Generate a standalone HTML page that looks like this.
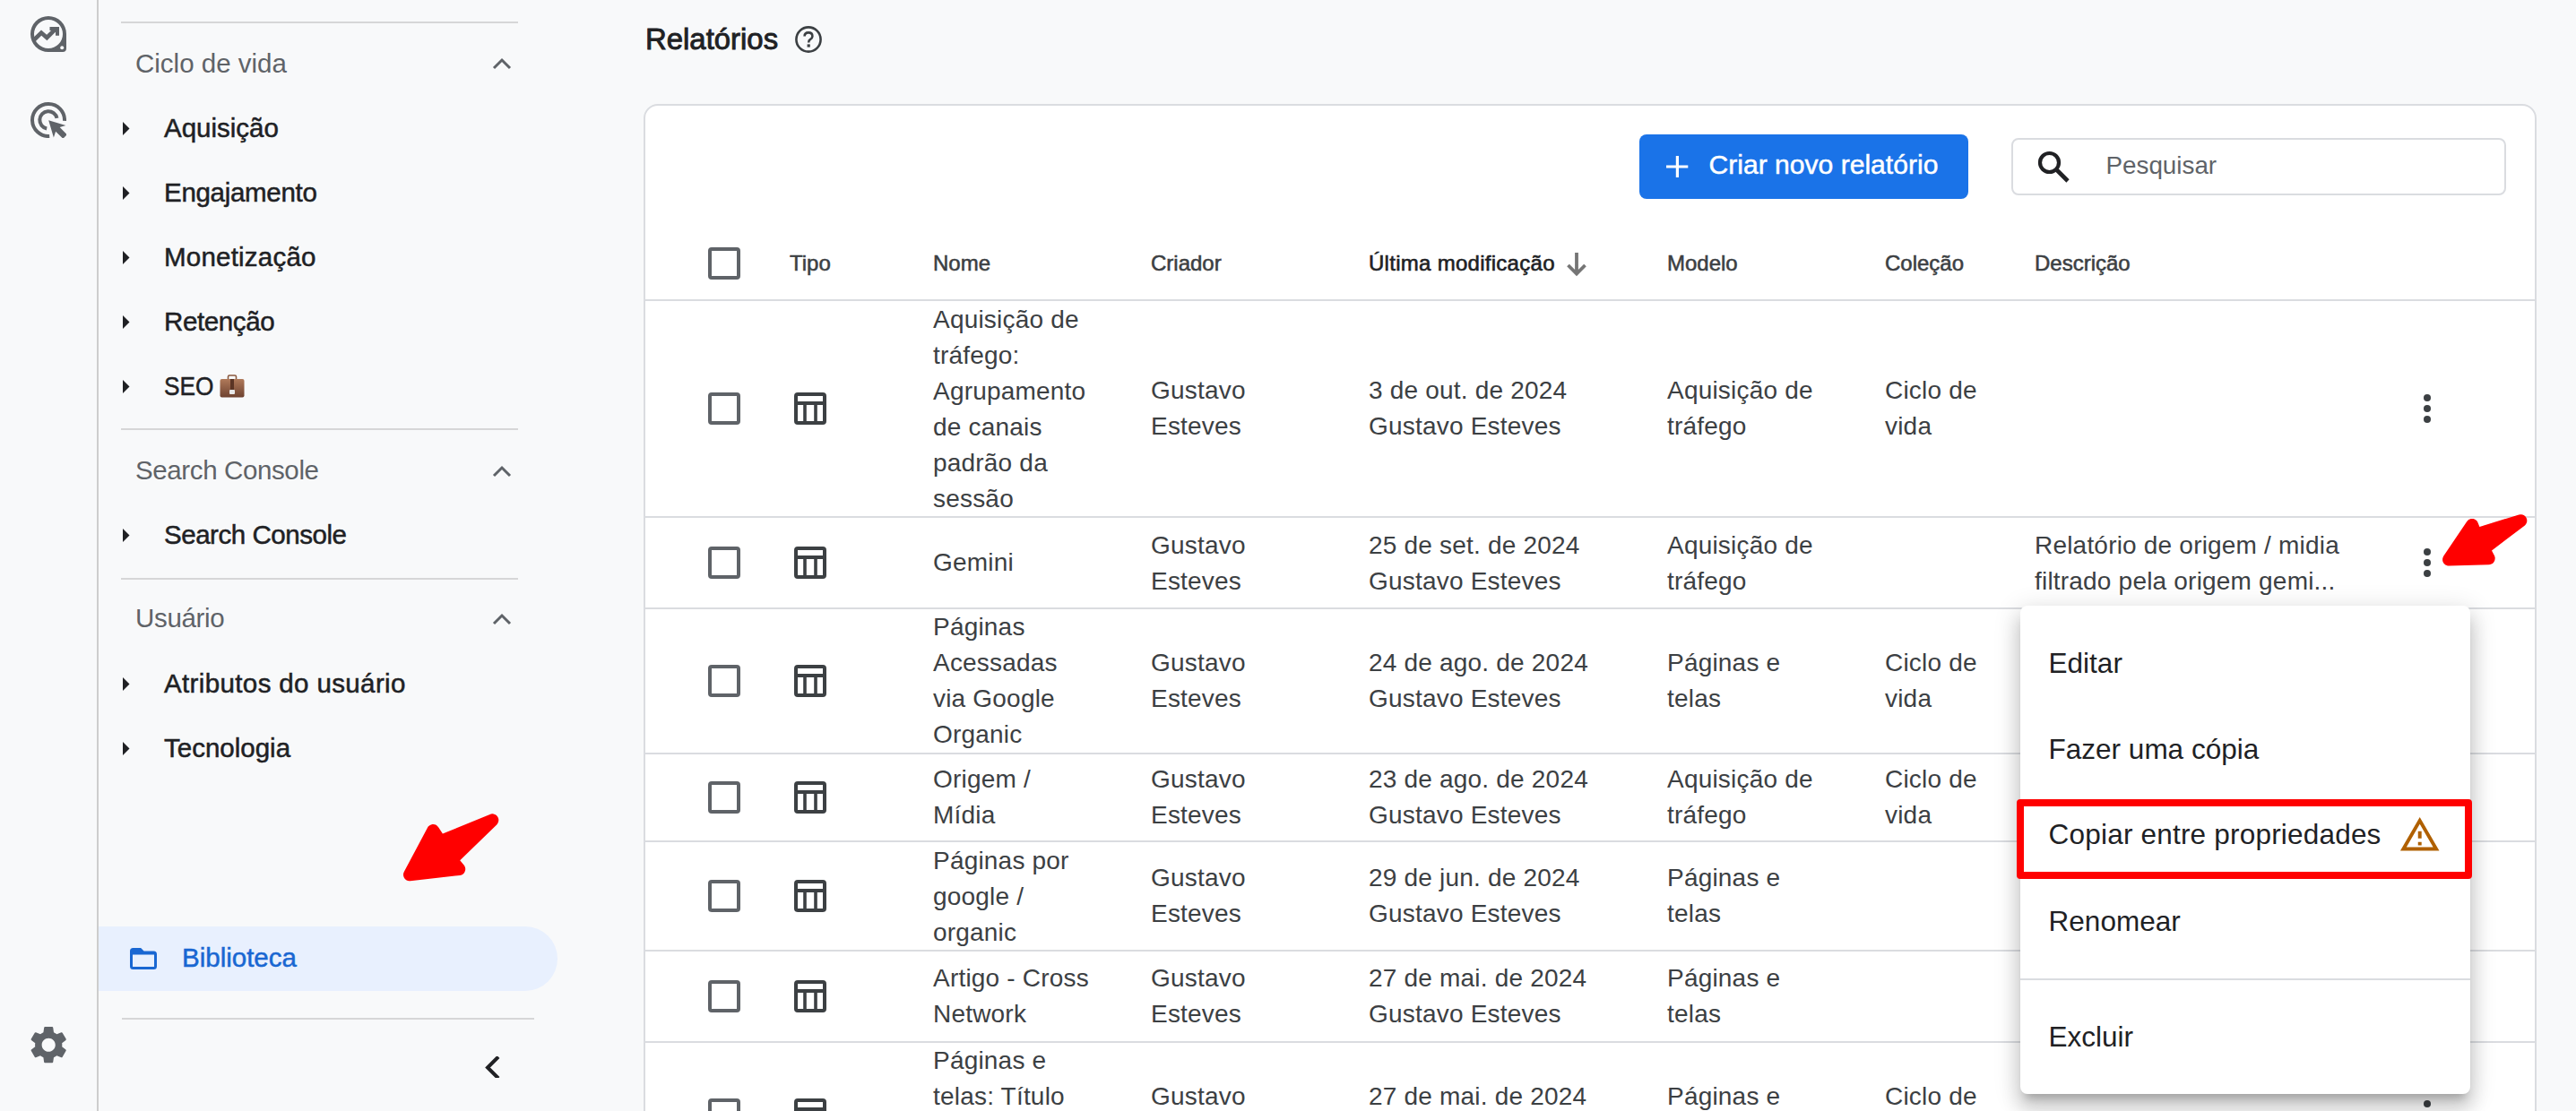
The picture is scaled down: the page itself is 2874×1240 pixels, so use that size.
<!DOCTYPE html>
<html><head><meta charset="utf-8"><style>
*{margin:0;padding:0;box-sizing:border-box}
html,body{width:2874px;height:1240px;overflow:hidden;background:#f8f9fa}
body{position:relative;font-family:"Liberation Sans",sans-serif}
.t{position:absolute;white-space:nowrap}
.abs{position:absolute}
.hl{position:absolute;height:2px;background:#dadce0}
</style></head><body>
<div class="abs" style="left:108px;top:0;width:2px;height:1240px;background:#cdcdcd"></div>
<svg class="abs" style="left:34px;top:18px" width="40" height="40" viewBox="0 0 40 40">
<path fill="#5f6368" fill-rule="evenodd" d="M20 0A20 20 0 0 0 0 20A20 20 0 0 0 20 40H36A4 4 0 0 0 40 36V20A20 20 0 0 0 20 0ZM20 4A16 16 0 1 1 20 36A16 16 0 1 1 20 4Z"/>
<circle cx="35.2" cy="35.2" r="2" fill="#f8f9fa"/>
<polyline points="3.5,27 12.1,18.6 18.3,24 27.5,14.8" fill="none" stroke="#5f6368" stroke-width="4.6" stroke-linejoin="miter"/>
<polygon points="21.5,12 32,12 32,21.8 28,21.8 28,16 21.5,16" fill="#5f6368"/>
</svg>
<svg class="abs" style="left:34px;top:114px" width="40" height="40" viewBox="0 0 40 40">
<path d="M38 20.9A18 18 0 1 0 21.2 38" fill="none" stroke="#5f6368" stroke-width="4"/>
<path d="M29.5 17.9A9.7 9.7 0 1 0 18.2 29.5" fill="none" stroke="#5f6368" stroke-width="4"/>
<polygon points="20.2,20.2 39.4,25.9 32.7,28.1 40.75,36.3 36.3,40.75 28.1,32.7 25.9,39.4" fill="#5f6368"/>
</svg>
<svg class="abs" style="left:28.8px;top:1140.8px" width="50.4" height="50.4" viewBox="0 0 24 24">
<path fill="#5f6368" d="M19.14 12.94c.04-.3.06-.61.06-.94 0-.32-.02-.64-.07-.94l2.03-1.58c.18-.14.23-.41.12-.61l-1.92-3.32c-.12-.22-.37-.29-.59-.22l-2.39.96c-.5-.38-1.03-.7-1.62-.94l-.36-2.54c-.04-.24-.24-.41-.48-.41h-3.84c-.24 0-.43.17-.47.41l-.36 2.54c-.59.24-1.13.57-1.62.94l-2.39-.96c-.22-.08-.47 0-.59.22L2.74 8.87c-.12.21-.08.47.12.61l2.03 1.58c-.05.3-.09.63-.09.94s.02.64.07.94l-2.03 1.58c-.18.14-.23.41-.12.61l1.92 3.32c.12.22.37.29.59.22l2.39-.96c.5.38 1.03.7 1.62.94l.36 2.54c.05.24.24.41.48.41h3.84c.24 0 .44-.17.47-.41l.36-2.54c.59-.24 1.13-.56 1.62-.94l2.39.96c.22.08.47 0 .59-.22l1.92-3.32c.12-.22.07-.47-.12-.61l-2.01-1.58zM12 15.6c-1.98 0-3.6-1.62-3.6-3.6s1.62-3.6 3.6-3.6 3.6 1.62 3.6 3.6-1.62 3.6-3.6 3.6z"/>
</svg>
<div class="hl" style="left:135px;top:24px;width:443px;background:#d6d6d7"></div>
<div class="hl" style="left:135px;top:478px;width:443px;background:#d6d6d7"></div>
<div class="hl" style="left:135px;top:645px;width:443px;background:#d6d6d7"></div>
<div class="hl" style="left:136px;top:1136px;width:460px;background:#d6d6d7"></div>
<div class="t" style="left:151px;top:53.82px;font-size:29.5px;line-height:33.925px;color:#5f6368;letter-spacing:0px">Ciclo de vida</div>
<svg class="abs" style="left:548px;top:59.3px" width="24" height="24" viewBox="0 0 24 24"><polyline points="3,17 12,8 21,17" fill="none" stroke="#5f6368" stroke-width="3"/></svg>
<div class="t" style="left:151px;top:508.42px;font-size:29.5px;line-height:33.925px;color:#5f6368;letter-spacing:-0.38px">Search Console</div>
<svg class="abs" style="left:548px;top:513.9px" width="24" height="24" viewBox="0 0 24 24"><polyline points="3,17 12,8 21,17" fill="none" stroke="#5f6368" stroke-width="3"/></svg>
<div class="t" style="left:151px;top:673.32px;font-size:29.5px;line-height:33.925px;color:#5f6368;letter-spacing:-0.33px">Usuário</div>
<svg class="abs" style="left:548px;top:678.8px" width="24" height="24" viewBox="0 0 24 24"><polyline points="3,17 12,8 21,17" fill="none" stroke="#5f6368" stroke-width="3"/></svg>
<div class="t" style="left:183px;top:125.82px;font-size:29.5px;line-height:33.925px;color:#202124;-webkit-text-stroke:0.5px #202124;letter-spacing:0px">Aquisição</div>
<svg class="abs" style="left:137px;top:136px" width="8" height="15" viewBox="0 0 8 15"><polygon points="0,0 7.5,7.5 0,15" fill="#202124"/></svg>
<div class="t" style="left:183px;top:197.82px;font-size:29.5px;line-height:33.925px;color:#202124;-webkit-text-stroke:0.5px #202124;letter-spacing:-0.3px">Engajamento</div>
<svg class="abs" style="left:137px;top:208px" width="8" height="15" viewBox="0 0 8 15"><polygon points="0,0 7.5,7.5 0,15" fill="#202124"/></svg>
<div class="t" style="left:183px;top:269.82px;font-size:29.5px;line-height:33.925px;color:#202124;-webkit-text-stroke:0.5px #202124;letter-spacing:0.22px">Monetização</div>
<svg class="abs" style="left:137px;top:280px" width="8" height="15" viewBox="0 0 8 15"><polygon points="0,0 7.5,7.5 0,15" fill="#202124"/></svg>
<div class="t" style="left:183px;top:341.82px;font-size:29.5px;line-height:33.925px;color:#202124;-webkit-text-stroke:0.5px #202124;letter-spacing:-0.37px">Retenção</div>
<svg class="abs" style="left:137px;top:352px" width="8" height="15" viewBox="0 0 8 15"><polygon points="0,0 7.5,7.5 0,15" fill="#202124"/></svg>
<div class="t" style="left:183px;top:413.82px;font-size:29.5px;line-height:33.925px;color:#202124;-webkit-text-stroke:0.5px #202124;letter-spacing:0px;transform:scaleX(0.89);transform-origin:0 0">SEO</div>
<svg class="abs" style="left:137px;top:424px" width="8" height="15" viewBox="0 0 8 15"><polygon points="0,0 7.5,7.5 0,15" fill="#202124"/></svg>
<div class="t" style="left:183px;top:579.82px;font-size:29.5px;line-height:33.925px;color:#202124;-webkit-text-stroke:0.5px #202124;letter-spacing:-0.46px">Search Console</div>
<svg class="abs" style="left:137px;top:590px" width="8" height="15" viewBox="0 0 8 15"><polygon points="0,0 7.5,7.5 0,15" fill="#202124"/></svg>
<div class="t" style="left:183px;top:745.82px;font-size:29.5px;line-height:33.925px;color:#202124;-webkit-text-stroke:0.5px #202124;letter-spacing:0.37px">Atributos do usuário</div>
<svg class="abs" style="left:137px;top:756px" width="8" height="15" viewBox="0 0 8 15"><polygon points="0,0 7.5,7.5 0,15" fill="#202124"/></svg>
<div class="t" style="left:183px;top:817.82px;font-size:29.5px;line-height:33.925px;color:#202124;-webkit-text-stroke:0.5px #202124;letter-spacing:0px">Tecnologia</div>
<svg class="abs" style="left:137px;top:828px" width="8" height="15" viewBox="0 0 8 15"><polygon points="0,0 7.5,7.5 0,15" fill="#202124"/></svg>
<svg class="abs" style="left:245px;top:418px" width="28" height="26" viewBox="0 0 28 26">
<defs><linearGradient id="bc" x1="0" y1="0" x2="0" y2="1"><stop offset="0" stop-color="#b07a5a"/><stop offset="1" stop-color="#6e4230"/></linearGradient></defs>
<path d="M9.5 5V2.5Q9.5 1 11 1H17Q18.5 1 18.5 2.5V5" fill="none" stroke="#8a5a40" stroke-width="1.6"/>
<rect x="0.5" y="5" width="27" height="20.5" rx="2" fill="url(#bc)"/>
<rect x="12" y="5" width="4" height="12" fill="#5a3424"/>
<rect x="11" y="17" width="6" height="5" rx="1" fill="#e8e8e8"/>
</svg>
<div class="abs" style="left:110px;top:1034px;width:512px;height:72px;background:#e8f0fe;border-radius:0 36px 36px 0"></div>
<svg class="abs" style="left:145px;top:1058px" width="30" height="24" viewBox="0 0 30 24">
<path d="M1.5 3.5Q1.5 1.5 3.5 1.5H11.5L15 5H26.5Q28.5 5 28.5 7V20.5Q28.5 22.5 26.5 22.5H3.5Q1.5 22.5 1.5 20.5Z" fill="none" stroke="#1967d2" stroke-width="3"/>
<path d="M1.5 3.5Q1.5 1.5 3.5 1.5H11.5L15 5H28.5V7.5H1.5Z" fill="#1967d2"/>
</svg>
<div class="t" style="left:203px;top:1051.82px;font-size:29.5px;line-height:33.925px;color:#1967d2;-webkit-text-stroke:0.5px #1967d2">Biblioteca</div>
<svg class="abs" style="left:537px;top:1179px" width="24" height="24" viewBox="0 0 24 24"><polyline points="19,0.5 7,12.5 19,24.5" fill="none" stroke="#202124" stroke-width="4"/></svg>
<div class="t" style="left:720px;top:24.68px;font-size:32.9px;line-height:37.834999999999994px;color:#202124;-webkit-text-stroke:0.9px #202124">Relatórios</div>
<svg class="abs" style="left:886px;top:28px" width="32" height="32" viewBox="0 0 32 32"><circle cx="16" cy="16" r="13.6" fill="none" stroke="#3c4043" stroke-width="2.6"/><path d="M11.6 12.6Q11.6 8.4 16 8.4Q20.4 8.4 20.4 12.4Q20.4 14.6 17.8 16.2Q16.2 17.2 16.2 19.4" fill="none" stroke="#3c4043" stroke-width="2.6"/><rect x="14.6" y="21.4" width="3.2" height="3.2" fill="#3c4043"/></svg>
<div class="abs" style="left:718px;top:116px;width:2112px;height:1300px;background:#fff;border:2px solid #dadce0;border-radius:16px"></div>
<div class="abs" style="left:1829px;top:150px;width:367px;height:72px;background:#1a73e8;border-radius:8px"></div>
<svg class="abs" style="left:1859px;top:174px" width="24.5" height="24" viewBox="0 0 24.5 24"><path d="M12.4 0V24M0 12H24.3" stroke="#fff" stroke-width="3.2"/></svg>
<div class="t" style="left:1906.5px;top:167.26px;font-size:30.1px;line-height:34.615px;color:#fff;-webkit-text-stroke:0.5px #fff">Criar novo relatório</div>
<div class="abs" style="left:2244px;top:154px;width:552px;height:64px;background:#fff;border:2px solid #dadce0;border-radius:8px"></div>
<svg class="abs" style="left:2273px;top:168px" width="36" height="36" viewBox="0 0 36 36"><circle cx="13.5" cy="13.5" r="10.5" fill="none" stroke="#202124" stroke-width="4.2"/><path d="M21 21L34 34" stroke="#202124" stroke-width="4.6"/></svg>
<div class="t" style="left:2349.5px;top:169.38px;font-size:27.8px;line-height:31.97px;color:#5f6368;">Pesquisar</div>
<div class="abs" style="left:790px;top:276px;width:36px;height:36px;border:4px solid #5f6368;border-radius:4px"></div>
<div class="t" style="left:881px;top:279.88px;font-size:24px;line-height:27.599999999999998px;color:#3c4043;-webkit-text-stroke:0.55px #3c4043">Tipo</div>
<div class="t" style="left:1041px;top:279.88px;font-size:24px;line-height:27.599999999999998px;color:#3c4043;-webkit-text-stroke:0.55px #3c4043">Nome</div>
<div class="t" style="left:1284px;top:279.88px;font-size:24px;line-height:27.599999999999998px;color:#3c4043;-webkit-text-stroke:0.55px #3c4043">Criador</div>
<div class="t" style="left:1527px;top:279.88px;font-size:24px;line-height:27.599999999999998px;color:#202124;-webkit-text-stroke:0.6px #202124;letter-spacing:0.28px">Última modificação</div>
<div class="t" style="left:1860px;top:279.88px;font-size:24px;line-height:27.599999999999998px;color:#3c4043;-webkit-text-stroke:0.55px #3c4043">Modelo</div>
<div class="t" style="left:2103px;top:279.88px;font-size:24px;line-height:27.599999999999998px;color:#3c4043;-webkit-text-stroke:0.55px #3c4043">Coleção</div>
<div class="t" style="left:2270px;top:279.88px;font-size:24px;line-height:27.599999999999998px;color:#3c4043;-webkit-text-stroke:0.55px #3c4043">Descrição</div>
<svg class="abs" style="left:1745px;top:279px" width="32" height="32" viewBox="0 0 32 32"><path d="M14 3V26M4.5 17L14 26.5L23.5 17" fill="none" stroke="#757575" stroke-width="3.8"/></svg>
<div class="hl" style="left:720px;top:334px;width:2108px"></div>
<div class="abs" style="left:790px;top:438.0px;width:36px;height:36px;border:4px solid #5f6368;border-radius:4px"></div>
<svg class="abs" style="left:886px;top:438.0px" width="36" height="36" viewBox="0 0 36 36"><path fill="#3c4043" fill-rule="evenodd" d="M4 0H32A4 4 0 0 1 36 4V32A4 4 0 0 1 32 36H4A4 4 0 0 1 0 32V4A4 4 0 0 1 4 0ZM4 4V10H32V4ZM4 14V32H10.2V14ZM13.8 14V32H22.2V14ZM25.8 14V32H32V14Z"/></svg>
<div class="t" style="left:1041px;top:340.50px;font-size:28px;line-height:32.199999999999996px;color:#3c4043;letter-spacing:0.2px">Aquisição de</div>
<div class="t" style="left:1041px;top:380.50px;font-size:28px;line-height:32.199999999999996px;color:#3c4043;letter-spacing:0.2px">tráfego:</div>
<div class="t" style="left:1041px;top:420.50px;font-size:28px;line-height:32.199999999999996px;color:#3c4043;letter-spacing:0.2px">Agrupamento</div>
<div class="t" style="left:1041px;top:460.50px;font-size:28px;line-height:32.199999999999996px;color:#3c4043;letter-spacing:0.2px">de canais</div>
<div class="t" style="left:1041px;top:500.50px;font-size:28px;line-height:32.199999999999996px;color:#3c4043;letter-spacing:0.2px">padrão da</div>
<div class="t" style="left:1041px;top:540.50px;font-size:28px;line-height:32.199999999999996px;color:#3c4043;letter-spacing:0.2px">sessão</div>
<div class="t" style="left:1284px;top:419.90px;font-size:28px;line-height:32.199999999999996px;color:#3c4043;letter-spacing:0.2px">Gustavo</div>
<div class="t" style="left:1284px;top:459.90px;font-size:28px;line-height:32.199999999999996px;color:#3c4043;letter-spacing:0.2px">Esteves</div>
<div class="t" style="left:1527px;top:419.90px;font-size:28px;line-height:32.199999999999996px;color:#3c4043;letter-spacing:0.2px">3 de out. de 2024</div>
<div class="t" style="left:1527px;top:459.90px;font-size:28px;line-height:32.199999999999996px;color:#3c4043;letter-spacing:0.2px">Gustavo Esteves</div>
<div class="t" style="left:1860px;top:419.90px;font-size:28px;line-height:32.199999999999996px;color:#3c4043;letter-spacing:0.2px">Aquisição de</div>
<div class="t" style="left:1860px;top:459.90px;font-size:28px;line-height:32.199999999999996px;color:#3c4043;letter-spacing:0.2px">tráfego</div>
<div class="t" style="left:2103px;top:419.90px;font-size:28px;line-height:32.199999999999996px;color:#3c4043;letter-spacing:0.2px">Ciclo de</div>
<div class="t" style="left:2103px;top:459.90px;font-size:28px;line-height:32.199999999999996px;color:#3c4043;letter-spacing:0.2px">vida</div>
<svg class="abs" style="left:2700px;top:436.0px" width="16" height="40" viewBox="0 0 16 40"><circle cx="8" cy="8" r="4" fill="#3c4043"/><circle cx="8" cy="20" r="4" fill="#3c4043"/><circle cx="8" cy="32" r="4" fill="#3c4043"/></svg>
<div class="abs" style="left:790px;top:610.0px;width:36px;height:36px;border:4px solid #5f6368;border-radius:4px"></div>
<svg class="abs" style="left:886px;top:610.0px" width="36" height="36" viewBox="0 0 36 36"><path fill="#3c4043" fill-rule="evenodd" d="M4 0H32A4 4 0 0 1 36 4V32A4 4 0 0 1 32 36H4A4 4 0 0 1 0 32V4A4 4 0 0 1 4 0ZM4 4V10H32V4ZM4 14V32H10.2V14ZM13.8 14V32H22.2V14ZM25.8 14V32H32V14Z"/></svg>
<div class="t" style="left:1041px;top:612.20px;font-size:28px;line-height:32.199999999999996px;color:#3c4043;letter-spacing:0.2px">Gemini</div>
<div class="t" style="left:1284px;top:592.50px;font-size:28px;line-height:32.199999999999996px;color:#3c4043;letter-spacing:0.2px">Gustavo</div>
<div class="t" style="left:1284px;top:632.50px;font-size:28px;line-height:32.199999999999996px;color:#3c4043;letter-spacing:0.2px">Esteves</div>
<div class="t" style="left:1527px;top:592.50px;font-size:28px;line-height:32.199999999999996px;color:#3c4043;letter-spacing:0.2px">25 de set. de 2024</div>
<div class="t" style="left:1527px;top:632.50px;font-size:28px;line-height:32.199999999999996px;color:#3c4043;letter-spacing:0.2px">Gustavo Esteves</div>
<div class="t" style="left:1860px;top:592.50px;font-size:28px;line-height:32.199999999999996px;color:#3c4043;letter-spacing:0.2px">Aquisição de</div>
<div class="t" style="left:1860px;top:632.50px;font-size:28px;line-height:32.199999999999996px;color:#3c4043;letter-spacing:0.2px">tráfego</div>
<div class="t" style="left:2270px;top:592.50px;font-size:28px;line-height:32.199999999999996px;color:#3c4043;letter-spacing:0.2px">Relatório de origem / midia</div>
<div class="t" style="left:2270px;top:632.50px;font-size:28px;line-height:32.199999999999996px;color:#3c4043;letter-spacing:0.2px">filtrado pela origem gemi...</div>
<svg class="abs" style="left:2700px;top:608.0px" width="16" height="40" viewBox="0 0 16 40"><circle cx="8" cy="8" r="4" fill="#3c4043"/><circle cx="8" cy="20" r="4" fill="#3c4043"/><circle cx="8" cy="32" r="4" fill="#3c4043"/></svg>
<div class="hl" style="left:720px;top:576px;width:2108px"></div>
<div class="abs" style="left:790px;top:742.0px;width:36px;height:36px;border:4px solid #5f6368;border-radius:4px"></div>
<svg class="abs" style="left:886px;top:742.0px" width="36" height="36" viewBox="0 0 36 36"><path fill="#3c4043" fill-rule="evenodd" d="M4 0H32A4 4 0 0 1 36 4V32A4 4 0 0 1 32 36H4A4 4 0 0 1 0 32V4A4 4 0 0 1 4 0ZM4 4V10H32V4ZM4 14V32H10.2V14ZM13.8 14V32H22.2V14ZM25.8 14V32H32V14Z"/></svg>
<div class="t" style="left:1041px;top:684.10px;font-size:28px;line-height:32.199999999999996px;color:#3c4043;letter-spacing:0.2px">Páginas</div>
<div class="t" style="left:1041px;top:724.10px;font-size:28px;line-height:32.199999999999996px;color:#3c4043;letter-spacing:0.2px">Acessadas</div>
<div class="t" style="left:1041px;top:764.10px;font-size:28px;line-height:32.199999999999996px;color:#3c4043;letter-spacing:0.2px">via Google</div>
<div class="t" style="left:1041px;top:804.10px;font-size:28px;line-height:32.199999999999996px;color:#3c4043;letter-spacing:0.2px">Organic</div>
<div class="t" style="left:1284px;top:723.90px;font-size:28px;line-height:32.199999999999996px;color:#3c4043;letter-spacing:0.2px">Gustavo</div>
<div class="t" style="left:1284px;top:763.90px;font-size:28px;line-height:32.199999999999996px;color:#3c4043;letter-spacing:0.2px">Esteves</div>
<div class="t" style="left:1527px;top:723.90px;font-size:28px;line-height:32.199999999999996px;color:#3c4043;letter-spacing:0.2px">24 de ago. de 2024</div>
<div class="t" style="left:1527px;top:763.90px;font-size:28px;line-height:32.199999999999996px;color:#3c4043;letter-spacing:0.2px">Gustavo Esteves</div>
<div class="t" style="left:1860px;top:723.90px;font-size:28px;line-height:32.199999999999996px;color:#3c4043;letter-spacing:0.2px">Páginas e</div>
<div class="t" style="left:1860px;top:763.90px;font-size:28px;line-height:32.199999999999996px;color:#3c4043;letter-spacing:0.2px">telas</div>
<div class="t" style="left:2103px;top:723.90px;font-size:28px;line-height:32.199999999999996px;color:#3c4043;letter-spacing:0.2px">Ciclo de</div>
<div class="t" style="left:2103px;top:763.90px;font-size:28px;line-height:32.199999999999996px;color:#3c4043;letter-spacing:0.2px">vida</div>
<svg class="abs" style="left:2700px;top:740.0px" width="16" height="40" viewBox="0 0 16 40"><circle cx="8" cy="8" r="4" fill="#3c4043"/><circle cx="8" cy="20" r="4" fill="#3c4043"/><circle cx="8" cy="32" r="4" fill="#3c4043"/></svg>
<div class="hl" style="left:720px;top:678px;width:2108px"></div>
<div class="abs" style="left:790px;top:872.0px;width:36px;height:36px;border:4px solid #5f6368;border-radius:4px"></div>
<svg class="abs" style="left:886px;top:872.0px" width="36" height="36" viewBox="0 0 36 36"><path fill="#3c4043" fill-rule="evenodd" d="M4 0H32A4 4 0 0 1 36 4V32A4 4 0 0 1 32 36H4A4 4 0 0 1 0 32V4A4 4 0 0 1 4 0ZM4 4V10H32V4ZM4 14V32H10.2V14ZM13.8 14V32H22.2V14ZM25.8 14V32H32V14Z"/></svg>
<div class="t" style="left:1041px;top:853.90px;font-size:28px;line-height:32.199999999999996px;color:#3c4043;letter-spacing:0.2px">Origem /</div>
<div class="t" style="left:1041px;top:893.90px;font-size:28px;line-height:32.199999999999996px;color:#3c4043;letter-spacing:0.2px">Mídia</div>
<div class="t" style="left:1284px;top:853.90px;font-size:28px;line-height:32.199999999999996px;color:#3c4043;letter-spacing:0.2px">Gustavo</div>
<div class="t" style="left:1284px;top:893.90px;font-size:28px;line-height:32.199999999999996px;color:#3c4043;letter-spacing:0.2px">Esteves</div>
<div class="t" style="left:1527px;top:853.90px;font-size:28px;line-height:32.199999999999996px;color:#3c4043;letter-spacing:0.2px">23 de ago. de 2024</div>
<div class="t" style="left:1527px;top:893.90px;font-size:28px;line-height:32.199999999999996px;color:#3c4043;letter-spacing:0.2px">Gustavo Esteves</div>
<div class="t" style="left:1860px;top:853.90px;font-size:28px;line-height:32.199999999999996px;color:#3c4043;letter-spacing:0.2px">Aquisição de</div>
<div class="t" style="left:1860px;top:893.90px;font-size:28px;line-height:32.199999999999996px;color:#3c4043;letter-spacing:0.2px">tráfego</div>
<div class="t" style="left:2103px;top:853.90px;font-size:28px;line-height:32.199999999999996px;color:#3c4043;letter-spacing:0.2px">Ciclo de</div>
<div class="t" style="left:2103px;top:893.90px;font-size:28px;line-height:32.199999999999996px;color:#3c4043;letter-spacing:0.2px">vida</div>
<svg class="abs" style="left:2700px;top:870.0px" width="16" height="40" viewBox="0 0 16 40"><circle cx="8" cy="8" r="4" fill="#3c4043"/><circle cx="8" cy="20" r="4" fill="#3c4043"/><circle cx="8" cy="32" r="4" fill="#3c4043"/></svg>
<div class="hl" style="left:720px;top:840px;width:2108px"></div>
<div class="abs" style="left:790px;top:982.0px;width:36px;height:36px;border:4px solid #5f6368;border-radius:4px"></div>
<svg class="abs" style="left:886px;top:982.0px" width="36" height="36" viewBox="0 0 36 36"><path fill="#3c4043" fill-rule="evenodd" d="M4 0H32A4 4 0 0 1 36 4V32A4 4 0 0 1 32 36H4A4 4 0 0 1 0 32V4A4 4 0 0 1 4 0ZM4 4V10H32V4ZM4 14V32H10.2V14ZM13.8 14V32H22.2V14ZM25.8 14V32H32V14Z"/></svg>
<div class="t" style="left:1041px;top:944.70px;font-size:28px;line-height:32.199999999999996px;color:#3c4043;letter-spacing:0.2px">Páginas por</div>
<div class="t" style="left:1041px;top:984.70px;font-size:28px;line-height:32.199999999999996px;color:#3c4043;letter-spacing:0.2px">google /</div>
<div class="t" style="left:1041px;top:1024.70px;font-size:28px;line-height:32.199999999999996px;color:#3c4043;letter-spacing:0.2px">organic</div>
<div class="t" style="left:1284px;top:963.90px;font-size:28px;line-height:32.199999999999996px;color:#3c4043;letter-spacing:0.2px">Gustavo</div>
<div class="t" style="left:1284px;top:1003.90px;font-size:28px;line-height:32.199999999999996px;color:#3c4043;letter-spacing:0.2px">Esteves</div>
<div class="t" style="left:1527px;top:963.90px;font-size:28px;line-height:32.199999999999996px;color:#3c4043;letter-spacing:0.2px">29 de jun. de 2024</div>
<div class="t" style="left:1527px;top:1003.90px;font-size:28px;line-height:32.199999999999996px;color:#3c4043;letter-spacing:0.2px">Gustavo Esteves</div>
<div class="t" style="left:1860px;top:963.90px;font-size:28px;line-height:32.199999999999996px;color:#3c4043;letter-spacing:0.2px">Páginas e</div>
<div class="t" style="left:1860px;top:1003.90px;font-size:28px;line-height:32.199999999999996px;color:#3c4043;letter-spacing:0.2px">telas</div>
<svg class="abs" style="left:2700px;top:980.0px" width="16" height="40" viewBox="0 0 16 40"><circle cx="8" cy="8" r="4" fill="#3c4043"/><circle cx="8" cy="20" r="4" fill="#3c4043"/><circle cx="8" cy="32" r="4" fill="#3c4043"/></svg>
<div class="hl" style="left:720px;top:938px;width:2108px"></div>
<div class="abs" style="left:790px;top:1094.0px;width:36px;height:36px;border:4px solid #5f6368;border-radius:4px"></div>
<svg class="abs" style="left:886px;top:1094.0px" width="36" height="36" viewBox="0 0 36 36"><path fill="#3c4043" fill-rule="evenodd" d="M4 0H32A4 4 0 0 1 36 4V32A4 4 0 0 1 32 36H4A4 4 0 0 1 0 32V4A4 4 0 0 1 4 0ZM4 4V10H32V4ZM4 14V32H10.2V14ZM13.8 14V32H22.2V14ZM25.8 14V32H32V14Z"/></svg>
<div class="t" style="left:1041px;top:1075.90px;font-size:28px;line-height:32.199999999999996px;color:#3c4043;letter-spacing:0.2px">Artigo - Cross</div>
<div class="t" style="left:1041px;top:1115.90px;font-size:28px;line-height:32.199999999999996px;color:#3c4043;letter-spacing:0.2px">Network</div>
<div class="t" style="left:1284px;top:1075.90px;font-size:28px;line-height:32.199999999999996px;color:#3c4043;letter-spacing:0.2px">Gustavo</div>
<div class="t" style="left:1284px;top:1115.90px;font-size:28px;line-height:32.199999999999996px;color:#3c4043;letter-spacing:0.2px">Esteves</div>
<div class="t" style="left:1527px;top:1075.90px;font-size:28px;line-height:32.199999999999996px;color:#3c4043;letter-spacing:0.2px">27 de mai. de 2024</div>
<div class="t" style="left:1527px;top:1115.90px;font-size:28px;line-height:32.199999999999996px;color:#3c4043;letter-spacing:0.2px">Gustavo Esteves</div>
<div class="t" style="left:1860px;top:1075.90px;font-size:28px;line-height:32.199999999999996px;color:#3c4043;letter-spacing:0.2px">Páginas e</div>
<div class="t" style="left:1860px;top:1115.90px;font-size:28px;line-height:32.199999999999996px;color:#3c4043;letter-spacing:0.2px">telas</div>
<svg class="abs" style="left:2700px;top:1092.0px" width="16" height="40" viewBox="0 0 16 40"><circle cx="8" cy="8" r="4" fill="#3c4043"/><circle cx="8" cy="20" r="4" fill="#3c4043"/><circle cx="8" cy="32" r="4" fill="#3c4043"/></svg>
<div class="hl" style="left:720px;top:1060px;width:2108px"></div>
<div class="abs" style="left:790px;top:1226.0px;width:36px;height:36px;border:4px solid #5f6368;border-radius:4px"></div>
<svg class="abs" style="left:886px;top:1226.0px" width="36" height="36" viewBox="0 0 36 36"><path fill="#3c4043" fill-rule="evenodd" d="M4 0H32A4 4 0 0 1 36 4V32A4 4 0 0 1 32 36H4A4 4 0 0 1 0 32V4A4 4 0 0 1 4 0ZM4 4V10H32V4ZM4 14V32H10.2V14ZM13.8 14V32H22.2V14ZM25.8 14V32H32V14Z"/></svg>
<div class="t" style="left:1041px;top:1167.90px;font-size:28px;line-height:32.199999999999996px;color:#3c4043;letter-spacing:0.2px">Páginas e</div>
<div class="t" style="left:1041px;top:1207.90px;font-size:28px;line-height:32.199999999999996px;color:#3c4043;letter-spacing:0.2px">telas: Título</div>
<div class="t" style="left:1041px;top:1247.90px;font-size:28px;line-height:32.199999999999996px;color:#3c4043;letter-spacing:0.2px">da página e</div>
<div class="t" style="left:1041px;top:1287.90px;font-size:28px;line-height:32.199999999999996px;color:#3c4043;letter-spacing:0.2px">classe de tela</div>
<div class="t" style="left:1284px;top:1207.90px;font-size:28px;line-height:32.199999999999996px;color:#3c4043;letter-spacing:0.2px">Gustavo</div>
<div class="t" style="left:1284px;top:1247.90px;font-size:28px;line-height:32.199999999999996px;color:#3c4043;letter-spacing:0.2px">Esteves</div>
<div class="t" style="left:1527px;top:1207.90px;font-size:28px;line-height:32.199999999999996px;color:#3c4043;letter-spacing:0.2px">27 de mai. de 2024</div>
<div class="t" style="left:1527px;top:1247.90px;font-size:28px;line-height:32.199999999999996px;color:#3c4043;letter-spacing:0.2px">Gustavo Esteves</div>
<div class="t" style="left:1860px;top:1207.90px;font-size:28px;line-height:32.199999999999996px;color:#3c4043;letter-spacing:0.2px">Páginas e</div>
<div class="t" style="left:1860px;top:1247.90px;font-size:28px;line-height:32.199999999999996px;color:#3c4043;letter-spacing:0.2px">telas</div>
<div class="t" style="left:2103px;top:1207.90px;font-size:28px;line-height:32.199999999999996px;color:#3c4043;letter-spacing:0.2px">Ciclo de</div>
<div class="t" style="left:2103px;top:1247.90px;font-size:28px;line-height:32.199999999999996px;color:#3c4043;letter-spacing:0.2px">vida</div>
<svg class="abs" style="left:2700px;top:1224.0px" width="16" height="40" viewBox="0 0 16 40"><circle cx="8" cy="8" r="4" fill="#3c4043"/><circle cx="8" cy="20" r="4" fill="#3c4043"/><circle cx="8" cy="32" r="4" fill="#3c4043"/></svg>
<div class="hl" style="left:720px;top:1162px;width:2108px"></div>
<div class="abs" style="left:2254px;top:676px;width:502px;height:545px;background:#fff;border-radius:8px;box-shadow:0 10px 10px -6px rgba(0,0,0,.2),0 16px 20px 2px rgba(0,0,0,.14),0 6px 28px 4px rgba(0,0,0,.12)"></div>
<div class="t" style="left:2285.6px;top:722.17px;font-size:31.5px;line-height:36.224999999999994px;color:#202124;">Editar</div>
<div class="t" style="left:2285.6px;top:818.27px;font-size:31.5px;line-height:36.224999999999994px;color:#202124;">Fazer uma cópia</div>
<div class="t" style="left:2285.6px;top:913.17px;font-size:31.5px;line-height:36.224999999999994px;color:#202124;letter-spacing:0.2px">Copiar entre propriedades</div>
<div class="t" style="left:2285.6px;top:1009.77px;font-size:31.5px;line-height:36.224999999999994px;color:#202124;">Renomear</div>
<div class="t" style="left:2285.6px;top:1139.37px;font-size:31.5px;line-height:36.224999999999994px;color:#202124;">Excluir</div>
<div class="abs" style="left:2254px;top:1092px;width:502px;height:2px;background:#dadce0"></div>
<svg class="abs" style="left:2675.7px;top:908px" width="47.45" height="47.45" viewBox="0 0 24 24"><path fill="#b06000" d="M12 5.99L19.53 19H4.47L12 5.99M12 2L1 21h22L12 2zm1 14h-2v2h2v-2zm0-6h-2v4h2v-4z"/></svg>
<div class="abs" style="left:2250px;top:892px;width:508px;height:89px;border:8px solid #ff0000;border-radius:4px"></div>
<svg class="abs" style="left:0;top:0" width="2874" height="1240" viewBox="0 0 2874 1240">
<polygon points="2726.3,620.6 2725.6,621.9 2725.2,623.2 2725.1,624.6 2725.2,626.0 2725.6,627.3 2726.3,628.5 2727.2,629.6 2728.3,630.4 2729.6,631.1 2730.9,631.4 2732.3,631.5 2776.9,630.3 2778.3,630.1 2779.6,629.6 2780.8,628.9 2781.9,627.9 2782.7,626.8 2783.3,625.5 2783.6,624.1 2783.7,622.7 2783.4,621.3 2782.9,620.0 2780.0,614.5 2816.6,586.7 2817.6,585.7 2818.4,584.6 2819.0,583.3 2819.3,582.0 2819.3,580.6 2819.1,579.2 2818.6,577.9 2817.8,576.8 2816.8,575.8 2815.7,575.0 2814.4,574.4 2813.1,574.2 2811.7,574.2 2810.3,574.4 2766.4,587.9 2764.6,583.4 2764.0,582.2 2763.1,581.1 2762.0,580.2 2760.8,579.5 2759.5,579.1 2758.1,579.0 2756.8,579.1 2755.5,579.5 2754.2,580.1 2753.2,581.0 2752.3,582.1 2726.3,620.6" fill="#ff0000"/>
<polygon points="450.8,973.0 450.3,974.2 450.0,975.6 450.0,977.0 450.3,978.3 450.8,979.6 451.6,980.7 452.6,981.7 453.7,982.5 455.0,983.0 456.4,983.2 457.8,983.2 513.0,977.0 514.3,976.7 515.6,976.2 516.7,975.4 517.7,974.4 518.4,973.3 518.9,972.0 519.2,970.7 519.2,969.3 518.9,968.0 518.4,966.7 517.6,965.6 513.2,960.3 554.2,920.4 555.1,919.3 555.7,918.1 556.1,916.8 556.3,915.4 556.2,914.0 555.8,912.7 555.1,911.5 554.3,910.4 553.2,909.5 552.0,908.9 550.7,908.5 549.3,908.3 547.9,908.5 546.6,908.9 493.9,930.6 489.1,923.2 488.2,922.2 487.2,921.3 486.1,920.6 484.9,920.2 483.6,920.0 482.2,920.1 481.0,920.4 479.7,920.9 478.7,921.7 477.7,922.6 477.0,923.7 450.8,973.0" fill="#ff0000"/>
</svg>
</body></html>
